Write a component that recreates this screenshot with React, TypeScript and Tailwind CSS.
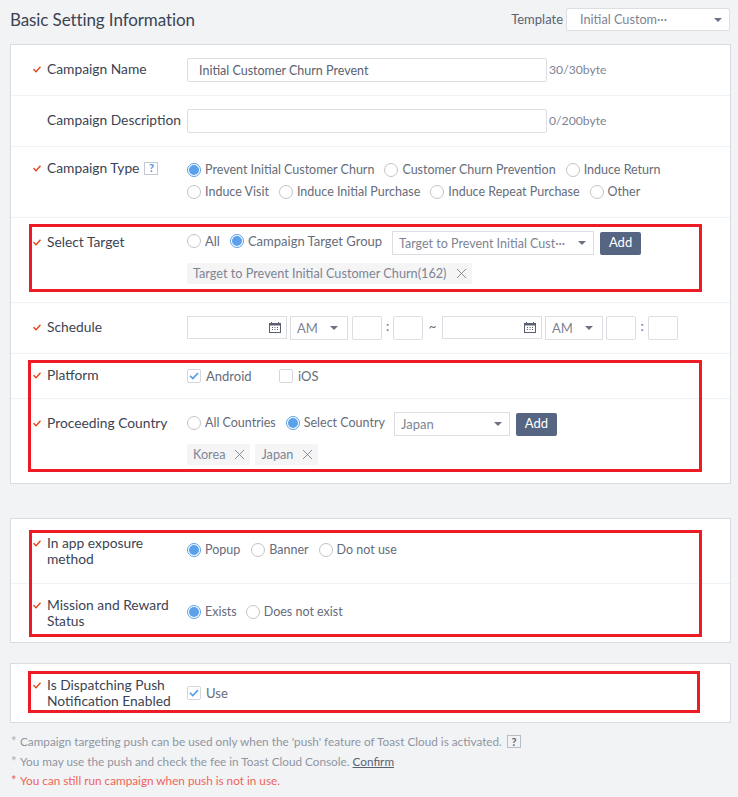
const font = "font-['Lato','Noto_Sans_CJK_KR',sans-serif]";

function Check() {
  return (
    <svg width="8" height="7" viewBox="0 0 8 7" className="mt-[5px] shrink-0" fill="none">
      <path d="M0.5 3.2 L3 5.8 L7.5 0.8" stroke="#e8421c" strokeWidth="1.4" />
    </svg>
  );
}

function Row({ label, required = true, h, last, children }: { label: React.ReactNode; required?: boolean; h: string; last?: boolean; children: React.ReactNode }) {
  return (
    <div className={`flex ${h} ${last ? "" : "border-b border-[#f1f2f4]"}`}>
      <div className="w-[22px] shrink-0" />
      <div className="w-[14px] shrink-0">{required && <Check />}</div>
      <div className="w-[140px] shrink-0 text-[13.8px] leading-[16px] text-[#3c4353]">{label}</div>
      <div className="min-w-0 flex-1">{children}</div>
    </div>
  );
}

function Radio({ label, on, size = "text-[12.5px]", className = "" }: { label: string; on?: boolean; size?: string; className?: string }) {
  return (
    <span className={`flex items-center gap-1 whitespace-nowrap leading-[16px] text-[#666c7a] ${size} ${className}`}>
      <span className={`flex h-[14px] w-[14px] shrink-0 items-center justify-center rounded-full border ${on ? "border-[#5aa0ea]" : "border-[#c4c4c4]"} bg-white`}>
        {on && <span className="h-[10px] w-[10px] rounded-full bg-[#5aa0ea]" />}
      </span>
      {label}
    </span>
  );
}

function Box({ label, on, className = "" }: { label: string; on?: boolean; className?: string }) {
  return (
    <span className={`flex items-center gap-[5px] whitespace-nowrap text-[13px] leading-[16px] text-[#666c7a] ${className}`}>
      <span className="flex h-[14px] w-[14px] shrink-0 items-center justify-center rounded-[2px] border border-[#d4d6dc] bg-white">
        {on && (
          <svg width="10" height="8" viewBox="0 0 10 8" fill="none">
            <path d="M1 3.8 L3.8 6.6 L9 1" stroke="#4e9be8" strokeWidth="1.6" />
          </svg>
        )}
      </span>
      {label}
    </span>
  );
}

function Caret() {
  return <span className="h-0 w-0 shrink-0 border-x-[4px] border-t-[4px] border-x-transparent border-t-[#6b7282]" />;
}

function Select({ value, className, textClass = "pt-[2px]" }: { value: string; className: string; textClass?: string }) {
  return (
    <div className={`flex items-center justify-between border border-[#dcdee3] bg-white text-[#7d8494] ${className}`}>
      <span className={`whitespace-nowrap ${textClass}`}>{value}</span>
      <Caret />
    </div>
  );
}

function Tag({ label }: { label: string }) {
  return (
    <span className="flex h-[21px] items-center gap-[9px] whitespace-nowrap bg-[#f5f5f6] pl-[6px] pr-[5px] text-[12.7px] text-[#7d8494]">
      {label}
      <svg width="11" height="11" viewBox="0 0 11 11" fill="none" stroke="#6f7480" strokeWidth="0.8">
        <path d="M1 1 L10 10 M10 1 L1 10" />
      </svg>
    </span>
  );
}

function AddButton() {
  return (
    <button className="flex h-[23px] w-[41px] items-center justify-center rounded-[2px] bg-[#566582] text-[13px] text-white">Add</button>
  );
}

function Calendar() {
  return (
    <svg width="12" height="11" viewBox="0 0 12 11" fill="none">
      <rect x="0.5" y="1.5" width="11" height="9" stroke="#5a6070" />
      <rect x="0" y="1" width="12" height="2.5" fill="#5a6070" />
      <path d="M2.5 0 V2 M9.5 0 V2" stroke="#5a6070" />
      <path d="M3 5.5 H4 M5.5 5.5 H6.5 M8 5.5 H9 M3 7.5 H4 M5.5 7.5 H6.5 M8 7.5 H9" stroke="#5a6070" />
    </svg>
  );
}

function DateInput() {
  return (
    <div className="flex h-[23px] w-[100px] shrink-0 items-center justify-end border border-[#dcdee3] bg-white pr-[5px]">
      <Calendar />
    </div>
  );
}

function TimeBox() {
  return <div className="h-[24px] w-[30px] shrink-0 rounded-[2px] border border-[#dcdee3] bg-white" />;
}

function Colon({ className = "w-[11px]" }: { className?: string }) {
  return <span className={`shrink-0 text-center text-[13px] leading-[20px] text-[#666c7a] ${className}`}>:</span>;
}

function Panel({ children }: { children: React.ReactNode }) {
  return <div className="mx-[10px] w-[721px] border border-[#d9dce1] bg-white">{children}</div>;
}

function RedBox({ className }: { className: string }) {
  return <div className={`pointer-events-none absolute border-[3px] border-[#ed1c24] ${className}`} />;
}

export default function App() {
  return (
    <div className={`relative h-[797px] w-[738px] overflow-hidden bg-[#f2f3f5] ${font}`}>
      <div className="flex h-[44px] items-start justify-between pl-[10px] pr-[8px]">
        <h1 className="mt-[8px] text-[17px] leading-[24px] tracking-[-0.1px] text-[#3c4353]">Basic Setting Information</h1>
        <div className="mt-[8px] flex items-center gap-[3px]">
          <span className="text-[13px] text-[#5b6170]">Template</span>
          <Select value="Initial Custom···" textClass="" className="h-[23px] w-[164px] rounded-[2px] pl-[13px] pr-[7px] text-[12.7px]" />
        </div>
      </div>

      <Panel>
        <Row label="Campaign Name" h="h-[51px] pt-[16px]">
          <div className="-mt-[3px] flex items-center gap-[2px]">
            <div className="flex h-[24px] w-[360px] items-center rounded-[2px] border border-[#dcdee3] bg-white pl-[11px] pt-[2px] text-[12.5px] text-[#5b6170]">Initial Customer Churn Prevent</div>
            <span className="text-[12.2px] text-[#7d8494]">30/30byte</span>
          </div>
        </Row>
        <Row label="Campaign Description" required={false} h="h-[51px] pt-[16px]">
          <div className="-mt-[3px] flex items-center gap-[2px]">
            <div className="h-[24px] w-[360px] rounded-[2px] border border-[#dcdee3] bg-white" />
            <span className="text-[12.2px] text-[#7d8494]">0/200byte</span>
          </div>
        </Row>
        <Row
          label={
            <span className="flex items-center gap-[5px]">
              Campaign Type
              <span className="flex h-[13px] w-[14px] items-center justify-center border border-[#c4c8d0] text-[11px] font-bold text-[#4e8fe0]">?</span>
            </span>
          }
          h="h-[71px] pt-[13px]"
        >
          <div className="flex flex-col gap-[6px] pt-[2px]">
            <div className="flex">
              <Radio on label="Prevent Initial Customer Churn" className="mr-[10px]" />
              <Radio label="Customer Churn Prevention" className="mr-[10px]" />
              <Radio label="Induce Return" />
            </div>
            <div className="flex">
              <Radio label="Induce Visit" className="mr-[10px]" />
              <Radio label="Induce Initial Purchase" className="mr-[10px]" />
              <Radio label="Induce Repeat Purchase" className="mr-[10px]" />
              <Radio label="Other" />
            </div>
          </div>
        </Row>
        <Row label="Select Target" h="h-[85px] pt-[16px]">
          <div className="-mt-[3px] flex items-center">
            <Radio label="All" size="text-[13px]" className="mr-[10px] -mt-[4px]" />
            <Radio on label="Campaign Target Group" size="text-[13px]" className="mr-[10px] -mt-[4px]" />
            <Select value="Target to Prevent Initial Cust···" className="h-[24px] w-[202px] pl-[6px] pr-[7px] text-[12.5px]" />
            <div className="ml-[6px]"><AddButton /></div>
          </div>
          <div className="mt-[8px] flex"><Tag label="Target to Prevent Initial Customer Churn(162)" /></div>
        </Row>
        <Row label="Schedule" h="h-[51px] pt-[16px]">
          <div className="-mt-[3px] flex items-start">
            <DateInput />
            <Select value="AM" className="ml-[3px] h-[24px] w-[58px] shrink-0 pl-[6px] pr-[9px] text-[13px]" />
            <div className="ml-[4px]"><TimeBox /></div>
            <Colon />
            <TimeBox />
            <span className="w-[19px] shrink-0 text-center text-[13px] leading-[20px] text-[#666c7a]">~</span>
            <DateInput />
            <Select value="AM" className="ml-[3px] h-[24px] w-[58px] shrink-0 pl-[6px] pr-[9px] text-[13px]" />
            <div className="ml-[3px]"><TimeBox /></div>
            <Colon className="w-[12px]" />
            <TimeBox />
          </div>
        </Row>
        <Row label="Platform" h="h-[45px] pt-[13px]">
          <div className="flex pt-[1px]">
            <Box on label="Android" className="w-[92px]" />
            <Box label="iOS" />
          </div>
        </Row>
        <Row label="Proceeding Country" h="h-[84px] pt-[16px]" last>
          <div className="-mt-[3px] flex items-center">
            <Radio label="All Countries" className="mr-[10px] -mt-[3px]" />
            <Radio on label="Select Country" className="mr-[9px] -mt-[3px]" />
            <Select value="Japan" className="h-[24px] w-[116px] pl-[6px] pr-[7px] text-[13px]" />
            <div className="ml-[6px]"><AddButton /></div>
          </div>
          <div className="mt-[8px] flex gap-[5px]">
            <Tag label="Korea" />
            <Tag label="Japan" />
          </div>
        </Row>
      </Panel>

      <div className="h-[34px]" />
      <Panel>
        <Row label="In app exposure method" h="h-[65px] pt-[16px]">
          <div className="flex pt-[7px]">
            <Radio on label="Popup" className="mr-[11px]" />
            <Radio label="Banner" className="mr-[10px]" />
            <Radio label="Do not use" />
          </div>
        </Row>
        <Row label="Mission and Reward Status" h="h-[58px] pt-[13px]" last>
          <div className="flex pt-[7px]">
            <Radio on label="Exists" className="mr-[9px]" />
            <Radio label="Does not exist" />
          </div>
        </Row>
      </Panel>

      <div className="h-[20px]" />
      <Panel>
        <Row label="Is Dispatching Push Notification Enabled" h="h-[58px] pt-[13px]" last>
          <div className="flex pt-[8px]">
            <Box on label="Use" />
          </div>
        </Row>
      </Panel>

      <div className="ml-[10px] mt-[9px] flex flex-col text-[11.75px] leading-[19.5px] text-[#8f95a1]">
        <div className="flex items-center">
          <span className="w-[10px] shrink-0 pl-[1px] text-[13px] text-[#a9adb6]">*</span>
          <span>Campaign targeting push can be used only when the 'push' feature of Toast Cloud is activated.</span>
          <span className="ml-[5px] flex h-[13px] w-[14px] items-center justify-center border border-[#b8bcc6] text-[11px] font-bold text-[#5b6170]">?</span>
        </div>
        <div className="flex">
          <span className="w-[10px] shrink-0 pl-[1px] text-[13px] text-[#a9adb6]">*</span>
          <span>You may use the push and check the fee in Toast Cloud Console. <span className="text-[#5b6170] underline">Confirm</span></span>
        </div>
        <div className="flex text-[#f0645a]">
          <span className="w-[10px] shrink-0 pl-[1px] text-[13px]">*</span>
          <span>You can still run campaign when push is not in use.</span>
        </div>
      </div>

      <RedBox className="left-[29px] top-[224px] h-[68px] w-[673px]" />
      <RedBox className="left-[28px] top-[360px] h-[112px] w-[674px]" />
      <RedBox className="left-[29px] top-[530px] h-[107px] w-[673px]" />
      <RedBox className="left-[28px] top-[671px] h-[42px] w-[672px]" />
    </div>
  );
}
